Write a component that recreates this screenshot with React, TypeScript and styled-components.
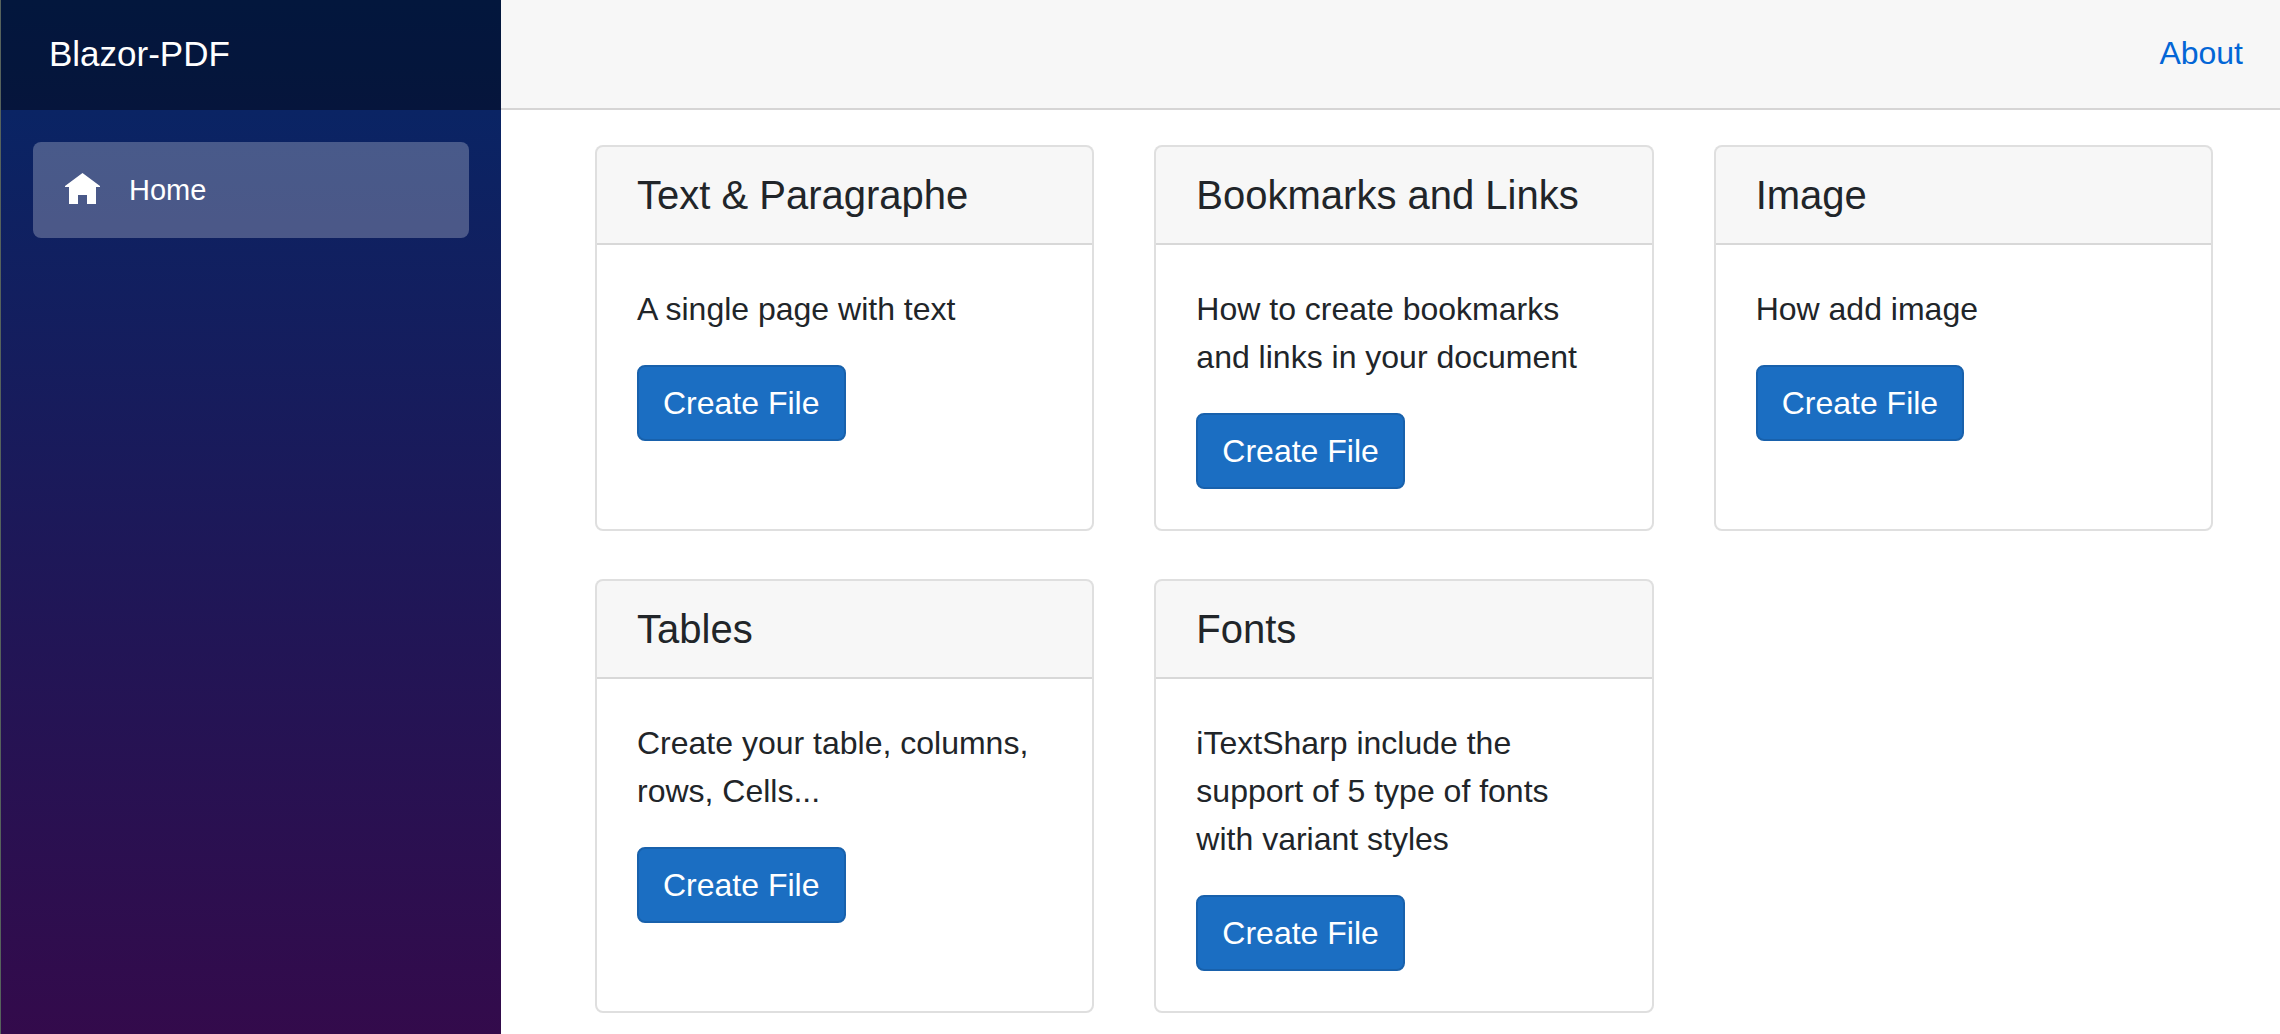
import React from "react";
import styled, { createGlobalStyle } from "styled-components";

const GlobalStyle = createGlobalStyle`
  *, *::before, *::after {
    box-sizing: border-box;
  }
  body {
    margin: 0;
    background: #fff;
    color: #212529;
    font-family: "Liberation Sans", Arial, sans-serif;
    font-size: 32px;
    line-height: 48px;
  }
`;

const Shell = styled.div`
  display: flex;
  min-height: 100vh;
  border-left: 1px solid #56625c;
`;

const Sidebar = styled.aside`
  flex: 0 0 500px;
  background: linear-gradient(180deg, rgb(5, 39, 103) 0%, #3a0647 115%);
`;

const BrandBar = styled.div`
  display: flex;
  align-items: center;
  height: 110px;
  padding: 0 48px 2px;
  background: rgba(0, 0, 0, 0.4);
`;

const Brand = styled.a`
  color: #fff;
  font-size: 35px;
  text-decoration: none;
`;

const Nav = styled.nav`
  padding: 32px;
`;

const NavItem = styled.a<{ $active?: boolean }>`
  display: flex;
  align-items: center;
  gap: 28px;
  height: 96px;
  padding: 0 32px;
  border-radius: 8px;
  background: ${(p) => (p.$active ? "rgba(255, 255, 255, 0.25)" : "transparent")};
  color: ${(p) => (p.$active ? "#fff" : "#d7d7d7")};
  font-size: 29px;
  text-decoration: none;
`;

const NavIcon = styled.svg`
  width: 36px;
  height: 34px;
  fill: currentColor;
`;

const Main = styled.div`
  flex: 1;
  min-width: 0;
`;

const TopBar = styled.header`
  display: flex;
  align-items: center;
  justify-content: flex-end;
  height: 110px;
  padding: 0 37px 2px;
  background: #f7f7f7;
  border-bottom: 2px solid #d6d5d5;
`;

const TopLink = styled.a`
  color: #0366d6;
  text-decoration: none;
`;

const CardGrid = styled.main`
  display: grid;
  grid-template-columns: repeat(3, minmax(0, 1fr));
  gap: 48px 60px;
  padding: 35px 67px 21px 94px;
`;

const Card = styled.section`
  border: 2px solid rgba(0, 0, 0, 0.125);
  border-radius: 8px;
  background: #fff;
`;

const CardHeader = styled.div`
  padding: 24px 40px;
  border-bottom: 2px solid rgba(0, 0, 0, 0.125);
  border-radius: 6px 6px 0 0;
  background: rgba(0, 0, 0, 0.03);
`;

const CardTitle = styled.h4`
  margin: 0;
  font-size: 40px;
  font-weight: 400;
  line-height: 48px;
`;

const CardBody = styled.div`
  display: flex;
  flex-direction: column;
  align-items: flex-start;
  gap: 32px;
  padding: 40px;
`;

const CardText = styled.p`
  margin: 0;
`;

const Button = styled.button`
  padding: 12px 24px;
  border: 2px solid #1861ac;
  border-radius: 8px;
  background: #1b6ec2;
  color: #fff;
  font: inherit;
  cursor: pointer;
`;

const samples = [
  { title: "Text & Paragraphe", text: "A single page with text" },
  { title: "Bookmarks and Links", text: "How to create bookmarks and links in your document" },
  { title: "Image", text: "How add image" },
  { title: "Tables", text: "Create your table, columns, rows, Cells..." },
  { title: "Fonts", text: "iTextSharp include the support of 5 type of fonts with variant styles" },
];

export default function App() {
  return (
    <>
      <GlobalStyle />
      <Shell>
        <Sidebar>
          <BrandBar>
            <Brand href="#">Blazor-PDF</Brand>
          </BrandBar>
          <Nav>
            <NavItem href="#" $active>
              <NavIcon viewBox="0 0 36 34" aria-hidden="true">
                <path d="M17.5 0 L35 13 V14 H31 V31 H22 V22 H13 V31 H4 V14 H0 V13 Z" />
              </NavIcon>
              Home
            </NavItem>
          </Nav>
        </Sidebar>
        <Main>
          <TopBar>
            <TopLink href="#about">About</TopLink>
          </TopBar>
          <CardGrid>
            {samples.map((sample) => (
              <Card key={sample.title}>
                <CardHeader>
                  <CardTitle>{sample.title}</CardTitle>
                </CardHeader>
                <CardBody>
                  <CardText>{sample.text}</CardText>
                  <Button type="button">Create File</Button>
                </CardBody>
              </Card>
            ))}
          </CardGrid>
        </Main>
      </Shell>
    </>
  );
}
